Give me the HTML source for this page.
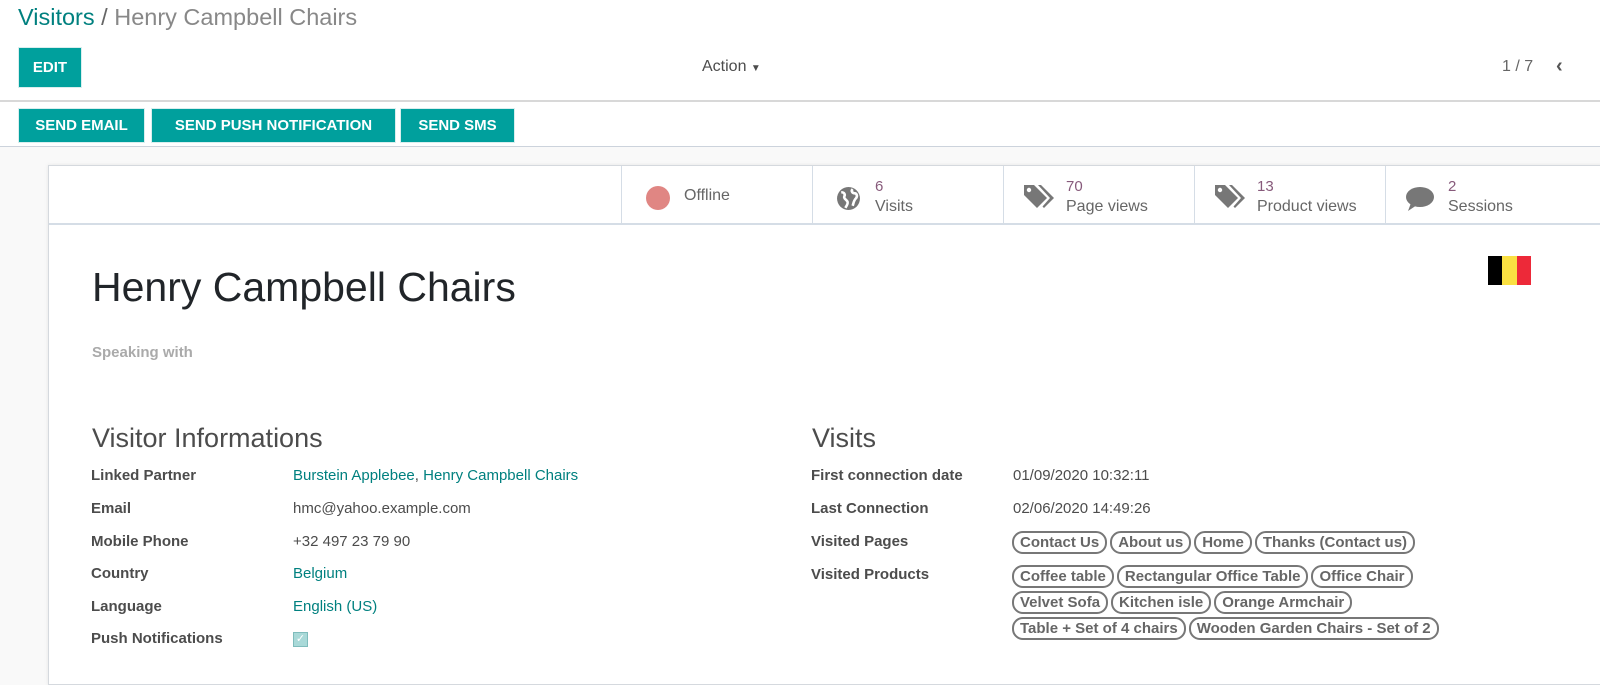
<!DOCTYPE html>
<html><head><meta charset="utf-8"><style>
*{box-sizing:border-box;margin:0;padding:0}
body{width:1600px;height:680px;overflow:hidden;background:#f9f9f9;font-family:"Liberation Sans",Roboto,sans-serif;color:#4c4c4c;position:relative;font-size:15px}
.top{position:absolute;left:0;top:0;width:1600px;height:147px;background:#fff;border-bottom:1px solid #ccd3dc}
.abs{position:absolute;white-space:nowrap}
.btn{position:absolute;background:#00a09d;color:#fff;font-weight:bold;font-size:15px;text-align:center;border:1px solid #d9eeee}
.sheet{position:absolute;left:48px;top:165px;width:1600px;height:520px;background:#fff;border:1px solid #d5d9de;box-shadow:0 0 4px rgba(0,0,0,.08)}
.bb{position:absolute;top:0;height:57px;width:191px;border-left:1px solid #d5dde6}
.bb .n{position:absolute;left:62px;top:12px;color:#875a7b;font-size:15px}
.bb .l{position:absolute;left:62px;top:32px;color:#666;font-size:16px}
.lab{position:absolute;font-weight:bold;color:#4c4c4c;font-size:15px}
.val{position:absolute;font-size:15px;color:#4c4c4c;white-space:nowrap}
.lk{color:#00807f}
.tag{display:inline-block;border:2px solid #777;border-radius:11px;padding:0 6px;font-weight:bold;color:#666;font-size:15px;line-height:19px;margin-right:3px}
</style></head><body>
<div class="top">
<div class="abs" style="left:18px;top:4px;font-size:23.5px;color:#ccc"><span style="color:#00807f">Visitors</span> <span style="color:#666">/</span> <span style="color:#888">Henry Campbell Chairs</span></div>
<div class="btn" style="left:18px;top:47px;width:64px;height:41px;line-height:39px">EDIT</div>
<div class="abs" style="left:702px;top:58px;font-size:16px;color:#4c4c4c">Action <span style="font-size:10px">▼</span></div>
<div class="abs" style="left:1502px;top:58px;font-size:16px;color:#666">1 / 7</div>
<div class="abs" style="left:1556px;top:55px;font-size:20px;color:#555;font-weight:bold">‹</div>
<div style="position:absolute;left:0;top:100px;width:1600px;border-top:2px solid #d8d8d8"></div>
<div class="btn" style="left:18px;top:108px;width:127px;height:35px;line-height:33px">SEND EMAIL</div>
<div class="btn" style="left:151px;top:108px;width:245px;height:35px;line-height:33px">SEND PUSH NOTIFICATION</div>
<div class="btn" style="left:400px;top:108px;width:115px;height:35px;line-height:33px">SEND SMS</div>
</div>
<div class="sheet">
<div style="position:absolute;left:0;top:57px;width:1600px;border-top:2px solid #d5dde6"></div>
<div class="bb" style="left:572px"><div style="position:absolute;left:24px;top:20px;width:24px;height:24px;border-radius:50%;background:#e08683"></div><div class="l" style="left:62px;top:21px">Offline</div></div>
<div class="bb" style="left:763px"><svg style="position:absolute;left:23px;top:20px" width="25" height="25" viewBox="0 0 24 24"><circle cx="12" cy="12" r="11" fill="#777"/><path d="M5 6c3 0 4 2 3 4s2 3 3 5-1 4-2 6M16 3c-2 2 0 4 2 4s3 3 1 5-2 4-3 7" stroke="#fff" stroke-width="2.5" fill="none"/></svg><div class="n">6</div><div class="l">Visits</div></div>
<div class="bb" style="left:954px"><svg style="position:absolute;left:18px;top:16px" width="34" height="30" viewBox="0 0 34 30"><path d="M2 3h10l13 13-10 10L2 13z" fill="#777"/><circle cx="7" cy="8" r="2.2" fill="#fff"/><path d="M16 3h3l13 13-10 10-1.5-1.5L28 16z" fill="#777"/></svg><div class="n">70</div><div class="l">Page views</div></div>
<div class="bb" style="left:1145px"><svg style="position:absolute;left:18px;top:16px" width="34" height="30" viewBox="0 0 34 30"><path d="M2 3h10l13 13-10 10L2 13z" fill="#777"/><circle cx="7" cy="8" r="2.2" fill="#fff"/><path d="M16 3h3l13 13-10 10-1.5-1.5L28 16z" fill="#777"/></svg><div class="n">13</div><div class="l">Product views</div></div>
<div class="bb" style="left:1336px"><svg style="position:absolute;left:19px;top:20px" width="30" height="26" viewBox="0 0 30 26"><ellipse cx="15" cy="11" rx="14" ry="10" fill="#777"/><path d="M6 17l-3 8 9-6z" fill="#777"/></svg><div class="n">2</div><div class="l">Sessions</div></div>
<div style="position:absolute;left:1439px;top:90px;width:43px;height:29px;display:flex"><div style="flex:1;background:#000"></div><div style="flex:1;background:#fae042"></div><div style="flex:1;background:#ed2939"></div></div>
<div class="abs" style="left:43px;top:98px;font-size:41px;color:#212529">Henry Campbell Chairs</div>
<div class="abs" style="left:43px;top:178px;font-size:15px;font-weight:bold;color:#aaa">Speaking with</div>
<div class="abs" style="left:43px;top:257px;font-size:27px;color:#4c4c4c">Visitor Informations</div>
<div class="abs" style="left:763px;top:257px;font-size:27px;color:#4c4c4c">Visits</div>
</div>
<div class="lab" style="left:91px;top:467px">Linked Partner</div><div class="val lk" style="left:293px;top:467px">Burstein Applebee<span style="color:#4c4c4c">,</span> Henry Campbell Chairs</div>
<div class="lab" style="left:91px;top:500px">Email</div><div class="val" style="left:293px;top:500px">hmc@yahoo.example.com</div>
<div class="lab" style="left:91px;top:533px">Mobile Phone</div><div class="val" style="left:293px;top:533px">+32 497 23 79 90</div>
<div class="lab" style="left:91px;top:565px">Country</div><div class="val lk" style="left:293px;top:565px">Belgium</div>
<div class="lab" style="left:91px;top:598px">Language</div><div class="val lk" style="left:293px;top:598px">English (US)</div>
<div class="lab" style="left:91px;top:630px">Push Notifications</div><div style="position:absolute;left:293px;top:632px;width:15px;height:15px;background:#a9d9d8;border:1px solid #7fbcbc;color:#fff;font-size:11px;text-align:center;line-height:13px">✓</div>
<div class="lab" style="left:811px;top:467px">First connection date</div><div class="val" style="left:1013px;top:467px">01/09/2020 10:32:11</div>
<div class="lab" style="left:811px;top:500px">Last Connection</div><div class="val" style="left:1013px;top:500px">02/06/2020 14:49:26</div>
<div class="lab" style="left:811px;top:533px">Visited Pages</div>
<div class="val" style="left:1012px;top:531px"><span class="tag">Contact Us</span><span class="tag">About us</span><span class="tag">Home</span><span class="tag">Thanks (Contact us)</span></div>
<div class="lab" style="left:811px;top:566px">Visited Products</div>
<div class="val" style="left:1012px;top:565px"><span class="tag">Coffee table</span><span class="tag">Rectangular Office Table</span><span class="tag">Office Chair</span></div>
<div class="val" style="left:1012px;top:591px"><span class="tag">Velvet Sofa</span><span class="tag">Kitchen isle</span><span class="tag">Orange Armchair</span></div>
<div class="val" style="left:1012px;top:617px"><span class="tag">Table + Set of 4 chairs</span><span class="tag">Wooden Garden Chairs - Set of 2</span></div>
</body></html>
